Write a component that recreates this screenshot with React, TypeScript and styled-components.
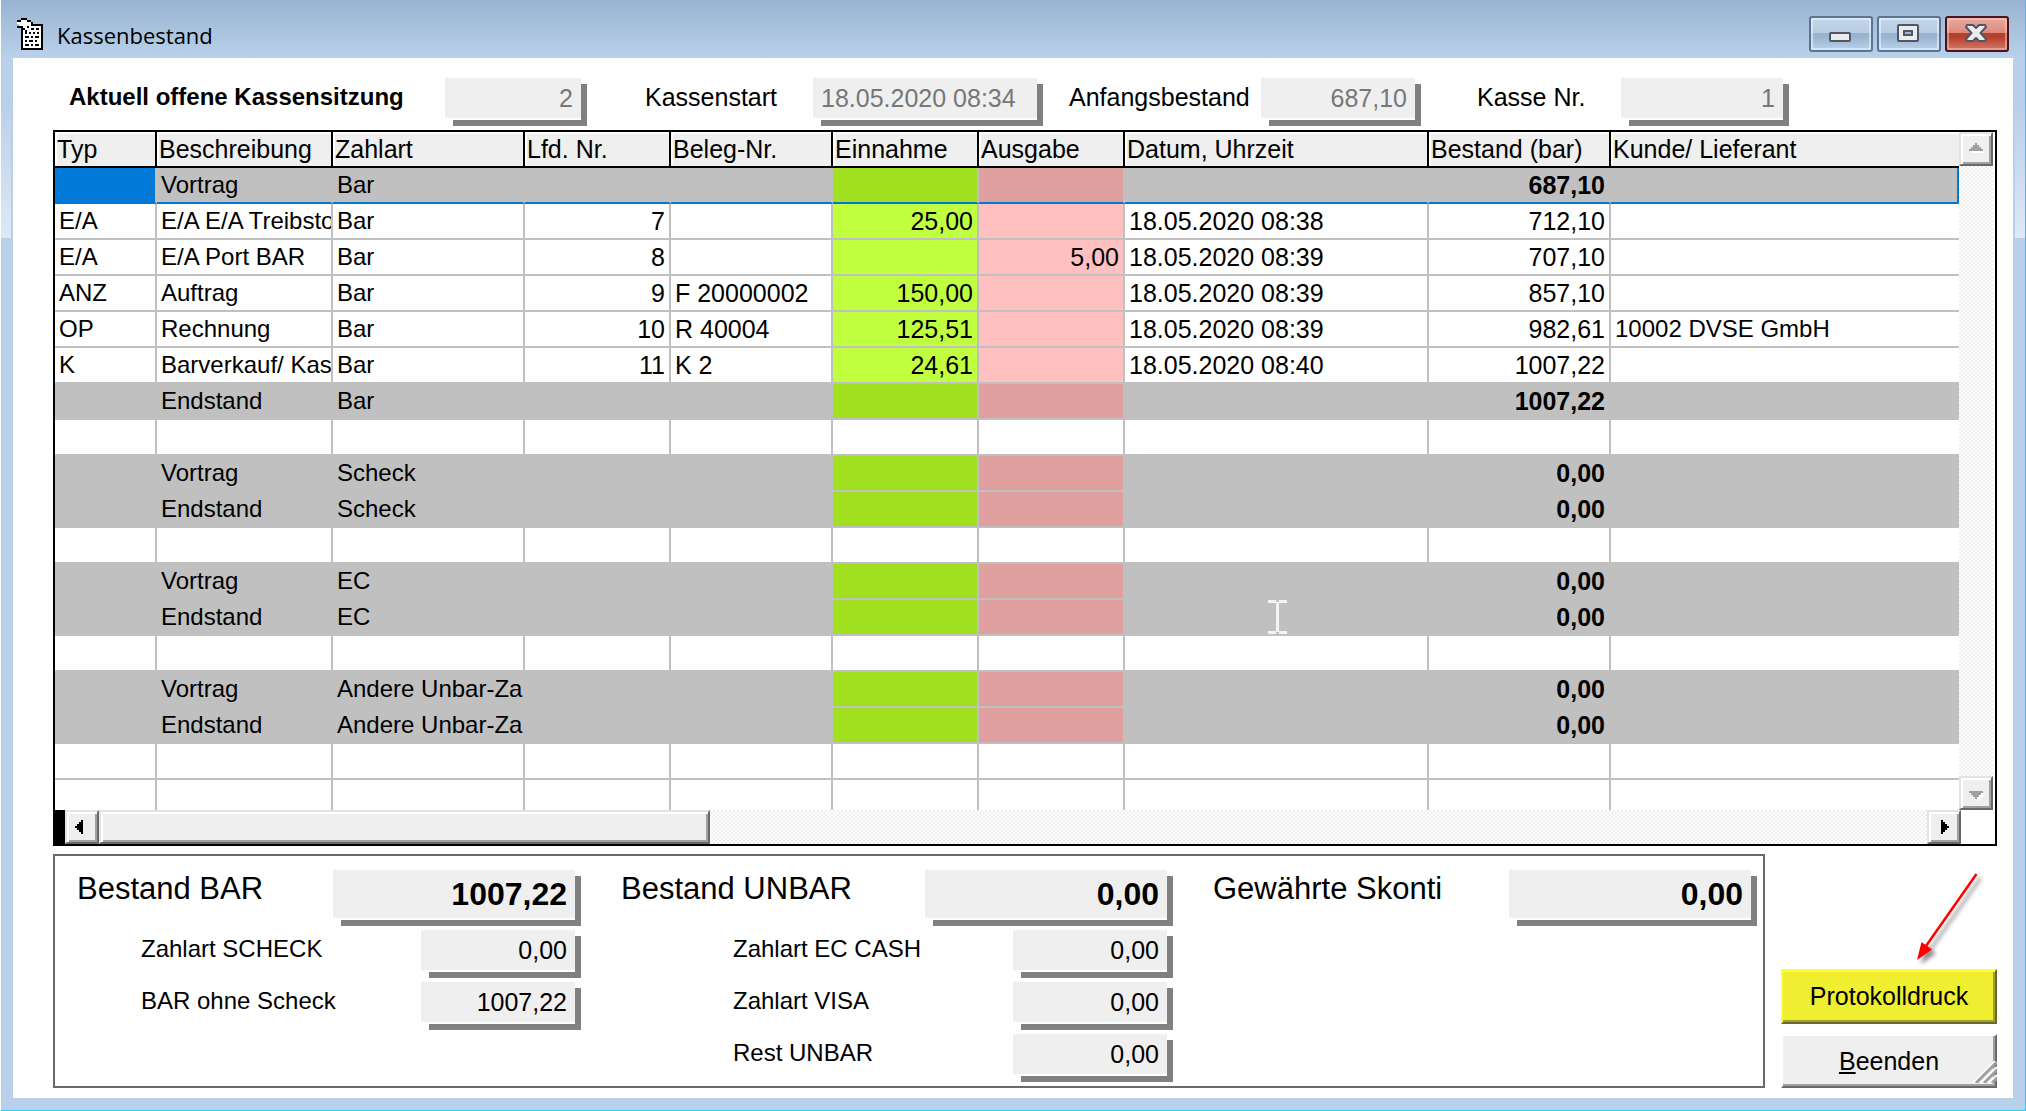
import React from "react";
import styled, { createGlobalStyle, css } from "styled-components";

const GlobalStyle = createGlobalStyle`
  *, *::before, *::after { box-sizing: border-box; }
  body {
    margin: 0;
    font-family: "Liberation Sans", Arial, sans-serif;
    font-size: 25px;
    color: #000;
  }
`;

/* ---------- window frame ---------- */

const Window = styled.div`
  display: flex;
  flex-direction: column;
  min-height: 100vh;
  padding: 0 12px 12px 12px;
  border-left: 1px solid #fff;
  border-right: 1px solid #2fc9dd;
  border-bottom: 1px solid #2cd5e6;
  background:
    linear-gradient(#b9cfe8, #dde9f6) left 100px / 10px 138px no-repeat,
    linear-gradient(#b9cfe8, #dde9f6) right 0 top 100px / 10px 138px no-repeat,
    linear-gradient(#99b3d1, #b9d1ea) left top / 100% 58px no-repeat,
    #b9d0ea;
`;

const TitleBar = styled.header`
  display: flex;
  align-items: center;
  height: 58px;
  padding: 10px 4px 0 4px;
`;

const Title = styled.h1`
  flex: 1;
  margin: 0 0 0 14px;
  padding-top: 2px;
  font-family: "Open Sans", "Noto Sans", sans-serif;
  font-size: 22px;
  line-height: 30px;
  font-weight: 400;
`;

const CaptionButtons = styled.div`
  display: flex;
  gap: 4px;
`;

const CaptionButton = styled.button<{ $close?: boolean }>`
  width: 64px;
  height: 36px;
  padding: 0;
  border: 2px solid ${(p) => (p.$close ? "#48141f" : "#5f7391")};
  border-radius: 3px;
  box-shadow: inset 0 0 0 2px ${(p) => (p.$close ? "rgba(255,200,190,0.5)" : "rgba(235,245,255,0.6)")};
  background: ${(p) =>
    p.$close
      ? "linear-gradient(#eaaaa0 0, #dc8a7c 46%, #b63f29 46%, #b8442e 62%, #d27a6a 100%)"
      : "linear-gradient(#c4d8ea 0, #b6cce2 46%, #99b3cf 46%, #9db7d2 62%, #bad1e9 100%)"};

  svg { display: block; margin: -2px; }
`;

const Content = styled.main`
  flex: 1;
  padding: 20px 16px 10px 40px;
  background: #fff;
`;

/* ---------- fields ---------- */

const FieldFrame = styled.span<{ $width?: number }>`
  display: block;
  padding: 0 6px 8px 0;
  ${(p) => p.$width && css`width: ${p.$width}px;`}
  background:
    linear-gradient(#808080, #808080) right bottom / 6px calc(100% - 6px) no-repeat,
    linear-gradient(#808080, #808080) right bottom / calc(100% - 8px) 6px no-repeat;
`;

const FieldInput = styled.input<{ $align?: string; $large?: boolean; $dim?: boolean }>`
  display: block;
  width: 100%;
  height: ${(p) => (p.$large ? 48 : 40)}px;
  padding: 0 8px;
  border: 0;
  border-radius: 0;
  outline: 0;
  background: #efefef;
  font-family: inherit;
  font-size: ${(p) => (p.$large ? 32 : 25)}px;
  font-weight: ${(p) => (p.$large ? 700 : 400)};
  color: ${(p) => (p.$dim ? "#777" : "#000")};
  text-align: ${(p) => p.$align || "right"};
`;

const SessionBar = styled.form`
  display: grid;
  grid-template-columns: 392fr 142fr 226fr 230fr 218fr 160fr 200fr 168fr 208fr;
  align-items: start;
  margin-bottom: 4px;
`;

const SessionLabel = styled.label<{ $pad: number; $strong?: boolean }>`
  padding-left: ${(p) => p.$pad}px;
  line-height: 38px;
  white-space: nowrap;
  ${(p) => p.$strong && css`
    font-size: 24px;
    font-weight: 700;
  `}
`;

/* ---------- grid ---------- */

const GridFrame = styled.section`
  position: relative;
  border: 2px solid #000;
`;

const GridBody = styled.div`
  display: grid;
  grid-template-columns: minmax(0, 1fr) 34px;
  padding-right: 2px;
`;

const Table = styled.table`
  width: 100%;
  table-layout: fixed;
  border-collapse: separate;
  border-spacing: 0;
`;

const HeadCell = styled.th`
  height: 36px;
  padding: 0 2px;
  border-right: 2px solid #000;
  border-bottom: 2px solid #000;
  background: #efefef;
  box-shadow: inset 2px 2px 0 #fff;
  font-weight: 400;
  line-height: 34px;
  text-align: left;
  white-space: nowrap;
  overflow: hidden;

  &:last-child {
    border-right: 0;
    box-shadow: inset 2px 2px 0 #fff, 2px 0 0 #000, 2px 2px 0 #000;
    overflow: visible;
  }
`;

type Tone = "plain" | "sum" | "blank";

const Cell = styled.td<{ $text?: boolean; $right?: boolean; $bold?: boolean }>`
  height: 36px;
  padding: 0 4px;
  border-right: 2px solid #c0c0c0;
  border-bottom: 2px solid #c0c0c0;
  font-size: ${(p) => (p.$text ? 24 : 25)}px;
  line-height: 34px;
  text-align: ${(p) => (p.$right ? "right" : "left")};
  font-weight: ${(p) => (p.$bold ? 700 : 400)};
  white-space: nowrap;
  overflow: hidden;

  &:last-child { border-right: 0; }
`;

const Row = styled.tr<{ $tone: Tone; $selected?: boolean }>`
  background: ${(p) => (p.$tone === "sum" ? "#c0c0c0" : "#fff")};

  ${(p) => p.$tone !== "blank" && css`
    ${Cell}:nth-child(6) { background: ${p.$tone === "sum" ? "#a0e020" : "#c0ff40"}; }
    ${Cell}:nth-child(7) { background: ${p.$tone === "sum" ? "#e0a0a0" : "#ffc0c0"}; }
  `}

  ${(p) => p.$selected && css`
    ${Cell} { border-bottom-color: #0078d7; }
    ${Cell}:first-child { background: #0078d7; }
    ${Cell}:last-child { border-right: 2px solid #0078d7; }
  `}

  &:last-child ${Cell} {
    height: 30px;
    border-bottom: 0;
    line-height: 30px;
  }
`;

const track = css`
  background: repeating-conic-gradient(#fff 0 25%, #efefef 0 50%) 0 0 / 4px 4px;
`;

const bevel = css`
  padding: 0;
  border: 2px solid;
  border-color: #e3e3e3 #696969 #696969 #e3e3e3;
  border-radius: 0;
  background: #efefef;
  box-shadow: inset 2px 2px 0 #fff, inset -2px -2px 0 #a0a0a0;
`;

const VScroll = styled.div`
  display: flex;
  flex-direction: column;
  justify-content: space-between;
  ${track}
`;

const HScroll = styled.div`
  display: flex;
  height: 34px;
  margin-right: 34px;
  border-left: 10px solid #000;
  ${track}
`;

const ArrowButton = styled.button`
  ${bevel}
  flex: none;
  width: 34px;
  height: 34px;

  svg { display: block; margin: -2px; }
`;

const Track = styled.div`
  flex: 1;
  display: flex;
`;

const Thumb = styled.div`
  ${bevel}
  width: 33.4%;
`;

const Pointer = styled.svg`
  position: absolute;
  left: 62.5%;
  top: 468px;
  pointer-events: none;
`;

/* ---------- footer ---------- */

const Footer = styled.div`
  display: grid;
  grid-template-columns: minmax(0, 1fr) 216px;
  gap: 16px;
  margin-top: 8px;
`;

const Totals = styled.section`
  display: grid;
  grid-template-columns: 504fr 552fr 544fr;
  gap: 40px;
  padding: 14px 6px 4px 22px;
  border: 2px solid #696969;
`;

const TotalGroup = styled.div`
  display: flex;
  flex-direction: column;
  gap: 4px;
`;

const TotalRow = styled.div`
  display: flex;
  justify-content: space-between;
  align-items: flex-start;
`;

const TotalLabel = styled.label<{ $large?: boolean; $indent?: number }>`
  padding-left: ${(p) => p.$indent || 0}px;
  font-size: ${(p) => (p.$large ? 31 : 24)}px;
  line-height: 38px;
  white-space: nowrap;
`;

const Side = styled.aside`
  display: flex;
  flex-direction: column;
`;

const PushButton = styled.button<{ $primary?: boolean }>`
  position: relative;
  height: ${(p) => (p.$primary ? 55 : 54)}px;
  padding: 0;
  border: 2px solid;
  border-radius: 0;
  font-family: inherit;
  font-size: 25px;
  color: #000;
  ${(p) => p.$primary
    ? css`
        margin-bottom: 10px;
        border-color: #ffff33 #69692d #69692d #ffff33;
        background: #efee31;
        box-shadow: inset 0 1px 0 #ffff33, inset -2px -2px 0 #a2a12c;
      `
    : css`
        border-color: #fff #696969 #696969 #fff;
        background: #efefef;
        box-shadow: inset -2px -2px 0 #a0a0a0;
      `}
`;

const Grip = styled.svg`
  position: absolute;
  right: -2px;
  bottom: 3px;
`;

/* ---------- data ---------- */

const columns: { title: string; width?: number; right?: boolean; text?: boolean }[] = [
  { title: "Typ", width: 102, text: true },
  { title: "Beschreibung", width: 176, text: true },
  { title: "Zahlart", width: 192, text: true },
  { title: "Lfd. Nr.", width: 146, right: true },
  { title: "Beleg-Nr.", width: 162 },
  { title: "Einnahme", width: 146, right: true },
  { title: "Ausgabe", width: 146, right: true },
  { title: "Datum, Uhrzeit", width: 304 },
  { title: "Bestand (bar)", width: 182, right: true },
  { title: "Kunde/ Lieferant", text: true },
];

const blank = { tone: "blank" as Tone, cells: ["", "", "", "", "", "", "", "", "", ""] };
const sum = (name: string, kind: string, amount: string) => ({
  tone: "sum" as Tone,
  cells: ["", name, kind, "", "", "", "", "", amount, ""],
});
const entry = (...cells: string[]) => ({ tone: "plain" as Tone, cells });

const rows = [
  sum("Vortrag", "Bar", "687,10"),
  entry("E/A", "E/A E/A Treibsto", "Bar", "7", "", "25,00", "", "18.05.2020 08:38", "712,10", ""),
  entry("E/A", "E/A Port BAR", "Bar", "8", "", "", "5,00", "18.05.2020 08:39", "707,10", ""),
  entry("ANZ", "Auftrag", "Bar", "9", "F 20000002", "150,00", "", "18.05.2020 08:39", "857,10", ""),
  entry("OP", "Rechnung", "Bar", "10", "R 40004", "125,51", "", "18.05.2020 08:39", "982,61", "10002 DVSE GmbH"),
  entry("K", "Barverkauf/ Kas", "Bar", "11", "K 2", "24,61", "", "18.05.2020 08:40", "1007,22", ""),
  sum("Endstand", "Bar", "1007,22"),
  blank,
  sum("Vortrag", "Scheck", "0,00"),
  sum("Endstand", "Scheck", "0,00"),
  blank,
  sum("Vortrag", "EC", "0,00"),
  sum("Endstand", "EC", "0,00"),
  blank,
  sum("Vortrag", "Andere Unbar-Za", "0,00"),
  sum("Endstand", "Andere Unbar-Za", "0,00"),
  blank,
  blank,
];

const totals = [
  {
    indent: 64,
    head: { id: "bar", label: "Bestand BAR", value: "1007,22" },
    items: [
      { id: "scheck", label: "Zahlart SCHECK", value: "0,00" },
      { id: "ohne", label: "BAR ohne Scheck", value: "1007,22" },
    ],
  },
  {
    indent: 112,
    head: { id: "unbar", label: "Bestand UNBAR", value: "0,00" },
    items: [
      { id: "ec", label: "Zahlart EC CASH", value: "0,00" },
      { id: "visa", label: "Zahlart VISA", value: "0,00" },
      { id: "rest", label: "Rest UNBAR", value: "0,00" },
    ],
  },
  {
    indent: 0,
    head: { id: "skonti", label: "Gewährte Skonti", value: "0,00" },
    items: [],
  },
];

/* ---------- drawings ---------- */

const AppIcon = () => (
  <svg width="26" height="32" viewBox="0 0 26 32" shapeRendering="crispEdges" aria-hidden="true">
    <rect x="5" y="7" width="20" height="24" fill="#fff" stroke="#000" strokeWidth="2" />
    <path d="M0 2H4V0H10V2H14V4H16V6H14V8H12V10H14V12H10V10H6V8H2V6H0Z" fill="#fff" />
    <path d="M0 2h4v2H0zM4 0h6v2H4zM10 2h4v2h-4zM14 4h2v2h-2zM0 8h4v2H0zM6 10h2v2H6zM10 8h2v2h-2zM8 12h2v2H8z" fill="#000" />
    <path d="M14 11h3M19 11h3M8 15h2M12 15h2M16 15h2M20 15h2M8 19h4M14 19h2M18 19h4M8 23h2M12 23h4M18 23h2M8 27h4M14 27h2M18 27h4" stroke="#000" strokeWidth="2" />
  </svg>
);

const Glyph = ({ kind }: { kind: "min" | "max" | "close" }) => (
  <svg width="64" height="36" viewBox="0 0 64 36" aria-hidden="true">
    {kind === "min" && <rect x="21" y="17" width="20" height="8" rx="1" fill="#ececec" stroke="#50556a" strokeWidth="2" />}
    {kind === "max" && (
      <>
        <rect x="21" y="9" width="20" height="16" rx="1" fill="#ececec" stroke="#50556a" strokeWidth="2" />
        <rect x="27" y="15" width="8" height="4" fill="#9db7d2" stroke="#50556a" strokeWidth="2" />
      </>
    )}
    {kind === "close" && (
      <path
        d="M22 9H28L31 12L34 9H40L41 11L35.500 17L41 23L40 25H34L31 22L28 25H22L21 23L26.500 17L21 11Z"
        fill="#ececec"
        stroke="#50556a"
        strokeWidth="2"
        strokeLinejoin="round"
      />
    )}
  </svg>
);

const arrows = {
  up: "M10 19h14v-2h-2v-2h-2v-2h-2v-2h-2v2h-2v2h-2v2h-2z",
  down: "M10 15h14v2h-2v2h-2v2h-2v2h-2v-2h-2v-2h-2v-2h-2z",
  left: "M18 10v14h-2v-2h-2v-2h-2v-2h-2v-2h2v-2h2v-2h2v-2z",
  right: "M14 10v14h2v-2h2v-2h2v-2h2v-2h-2v-2h-2v-2h-2v-2z",
};

const ScrollArrow = ({ dir, dim }: { dir: keyof typeof arrows; dim?: boolean }) => (
  <svg width="34" height="34" viewBox="0 0 34 34" shapeRendering="crispEdges" aria-hidden="true">
    {dim && <path d={arrows[dir]} fill="#fff" transform="translate(2 2)" />}
    <path d={arrows[dir]} fill={dim ? "#a0a0a0" : "#000"} />
  </svg>
);

const RedArrow = () => (
  <svg width="216" height="115" viewBox="0 0 216 115" aria-hidden="true">
    <defs>
      <filter id="arrowShadow" x="-20%" y="-20%" width="150%" height="150%">
        <feDropShadow dx="4" dy="4" stdDeviation="2" floodColor="#000" floodOpacity="0.45" />
      </filter>
    </defs>
    <g filter="url(#arrowShadow)">
      <path d="M195.500 20L145 92" stroke="#f00" strokeWidth="2.500" />
      <path d="M136 106L140.500 88L145.500 91.500L151 95.500Z" fill="#f00" />
    </g>
  </svg>
);

/* ---------- page ---------- */

type FieldProps = { id: string; value: string; width?: number; align?: string; large?: boolean; dim?: boolean };

const Field = ({ id, value, width, align, large, dim }: FieldProps) => (
  <FieldFrame $width={width}>
    <FieldInput id={id} defaultValue={value} readOnly $align={align} $large={large} $dim={dim} />
  </FieldFrame>
);

export default function App() {
  return (
    <>
      <GlobalStyle />
      <Window>
        <TitleBar>
          <AppIcon />
          <Title>Kassenbestand</Title>
          <CaptionButtons>
            <CaptionButton aria-label="Minimieren"><Glyph kind="min" /></CaptionButton>
            <CaptionButton aria-label="Maximieren"><Glyph kind="max" /></CaptionButton>
            <CaptionButton aria-label="Schließen" $close><Glyph kind="close" /></CaptionButton>
          </CaptionButtons>
        </TitleBar>

        <Content>
          <SessionBar>
            <SessionLabel htmlFor="sitzung" $pad={16} $strong>Aktuell offene Kassensitzung</SessionLabel>
            <Field id="sitzung" value="2" dim />
            <SessionLabel htmlFor="start" $pad={58}>Kassenstart</SessionLabel>
            <Field id="start" value="18.05.2020 08:34" align="left" dim />
            <SessionLabel htmlFor="anfang" $pad={26}>Anfangsbestand</SessionLabel>
            <Field id="anfang" value="687,10" dim />
            <SessionLabel htmlFor="kasse" $pad={56}>Kasse Nr.</SessionLabel>
            <Field id="kasse" value="1" dim />
          </SessionBar>

          <GridFrame>
            <GridBody>
              <Table>
                <colgroup>
                  {columns.map((c) => <col key={c.title} width={c.width} />)}
                </colgroup>
                <thead>
                  <tr>{columns.map((c) => <HeadCell key={c.title} scope="col">{c.title}</HeadCell>)}</tr>
                </thead>
                <tbody>
                  {rows.map((r, i) => (
                    <Row key={i} $tone={r.tone} $selected={i === 0}>
                      {r.cells.map((text, c) => (
                        <Cell
                          key={c}
                          $text={columns[c].text}
                          $right={columns[c].right}
                          $bold={r.tone === "sum" && c === 8}
                        >
                          {text}
                        </Cell>
                      ))}
                    </Row>
                  ))}
                </tbody>
              </Table>
              <VScroll>
                <ArrowButton aria-label="Nach oben"><ScrollArrow dir="up" dim /></ArrowButton>
                <ArrowButton aria-label="Nach unten"><ScrollArrow dir="down" dim /></ArrowButton>
              </VScroll>
            </GridBody>
            <HScroll>
              <ArrowButton aria-label="Nach links"><ScrollArrow dir="left" /></ArrowButton>
              <Track><Thumb /></Track>
              <ArrowButton aria-label="Nach rechts"><ScrollArrow dir="right" /></ArrowButton>
            </HScroll>
            <Pointer width="20" height="34" viewBox="0 0 20 34" shapeRendering="crispEdges" aria-hidden="true">
              <path d="M0 0h8v2h3V0h8v3h-8v28h8v3h-8v-2H8v2H0v-3h8V3H0z" fill="#f3f3f3" />
            </Pointer>
          </GridFrame>

          <Footer>
            <Totals>
              {totals.map((g) => (
                <TotalGroup key={g.head.id}>
                  <TotalRow>
                    <TotalLabel htmlFor={g.head.id} $large>{g.head.label}</TotalLabel>
                    <Field id={g.head.id} value={g.head.value} width={248} large />
                  </TotalRow>
                  {g.items.map((t) => (
                    <TotalRow key={t.id}>
                      <TotalLabel htmlFor={t.id} $indent={g.indent}>{t.label}</TotalLabel>
                      <Field id={t.id} value={t.value} width={160} />
                    </TotalRow>
                  ))}
                </TotalGroup>
              ))}
            </Totals>
            <Side>
              <RedArrow />
              <PushButton $primary>Protokolldruck</PushButton>
              <PushButton>
                <u>B</u>eenden
                <Grip width="24" height="22" viewBox="0 0 24 22" aria-hidden="true">
                  <path d="M0 22L24 -2M8 22L24 6M16 22L24 14" stroke="#fff" strokeWidth="2" />
                  <path d="M3 22L24 1M11 22L24 9M19 22L24 17" stroke="#a0a0a0" strokeWidth="3" />
                </Grip>
              </PushButton>
            </Side>
          </Footer>
        </Content>
      </Window>
    </>
  );
}
